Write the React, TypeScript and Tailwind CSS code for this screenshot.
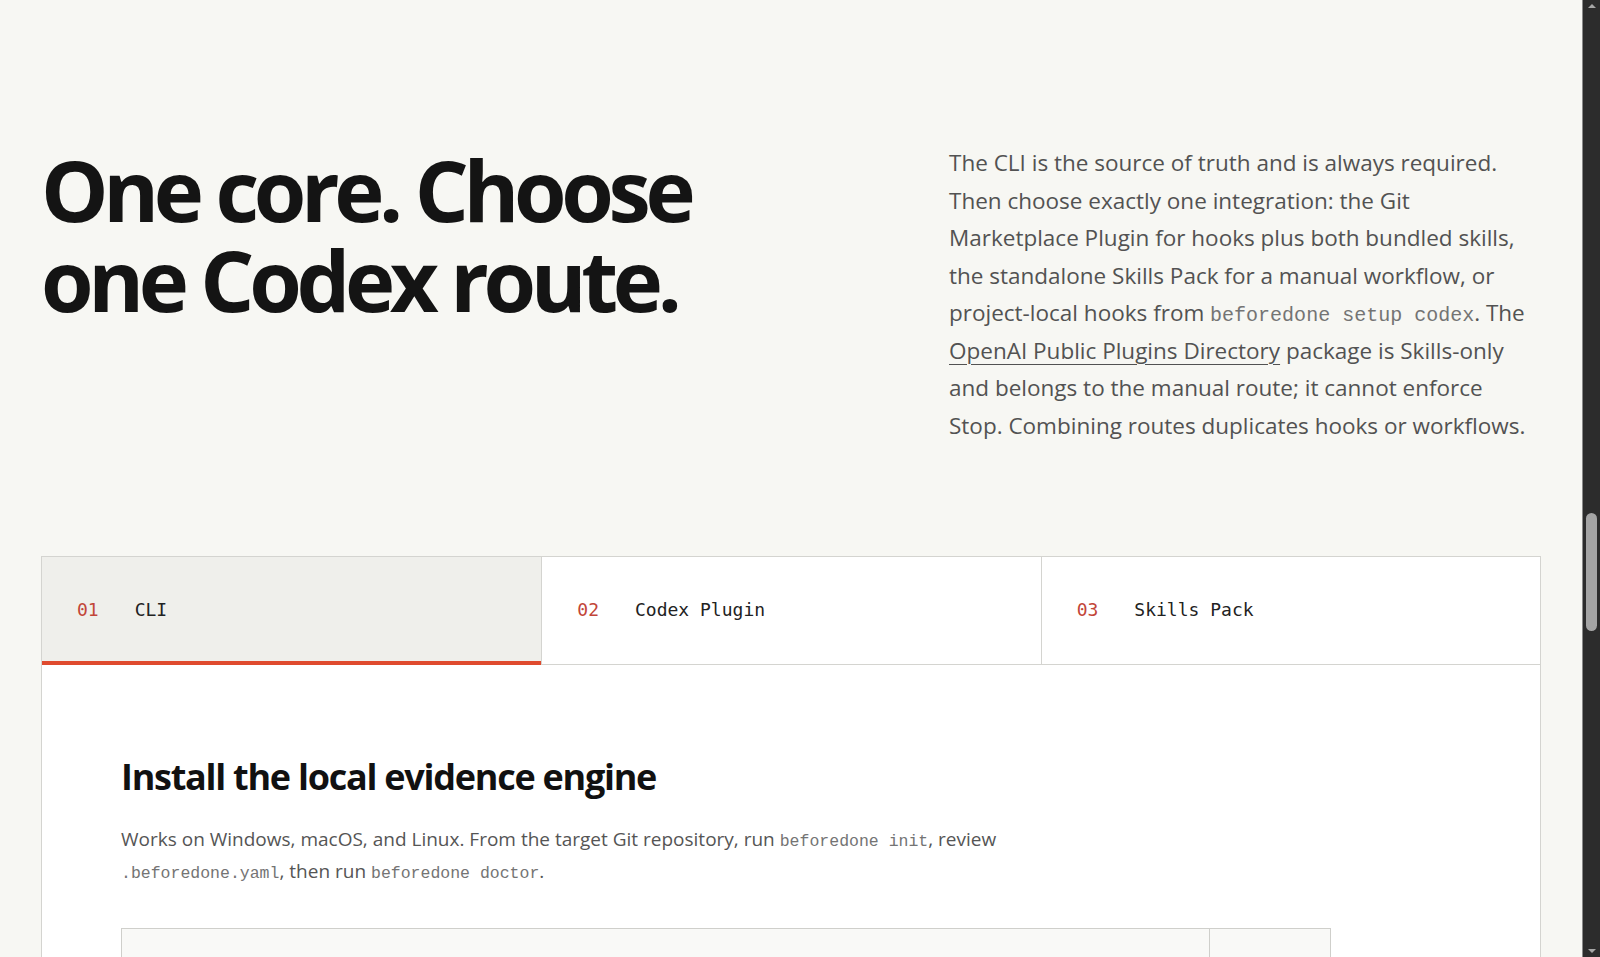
import React, { useState } from "react";

const sans = "font-['Open_Sans','Noto_Sans',sans-serif]";
const mono = "font-['Liberation_Mono','DejaVu_Sans_Mono',monospace]";
const tabMono = "font-['DejaVu_Sans_Mono','Liberation_Mono',monospace]";

function Code({ children, size }: { children: React.ReactNode; size: string }) {
  return <code className={`${mono} ${size} leading-none text-[#747474]`}>{children}</code>;
}

const tabs = [
  { n: "01", label: "CLI" },
  { n: "02", label: "Codex Plugin" },
  { n: "03", label: "Skills Pack" },
];

function Scrollbar() {
  return (
    <div className="w-[18px] shrink-0 h-full bg-[#2c2c2c] border-l border-[#8a8a8a] flex flex-col items-center">
      <svg width="10" height="8" viewBox="0 0 10 8" className="mt-[2px]">
        <path d="M1 6 L5 2 L9 6 Z" fill="#a6a6a6" />
      </svg>
      <div className="h-[503px] shrink-0" />
      <div className="w-[11px] h-[118px] rounded-full bg-[#a4a4a4]" />
      <div className="flex-1" />
      <svg width="10" height="8" viewBox="0 0 10 8" className="mb-[2px]">
        <path d="M1 2 L5 6 L9 2 Z" fill="#a6a6a6" />
      </svg>
    </div>
  );
}

export default function App() {
  const [active, setActive] = useState(0);
  return (
    <div className={`h-[957px] w-full flex overflow-hidden bg-[#f7f7f3] ${sans}`}>
      <main className="flex-1 h-full overflow-hidden">
        <div className="max-w-[1500px] mx-auto pt-[144px]">
          {/* Hero */}
          <section className="flex justify-between items-start">
            <h1 className="text-[85px] leading-[90px] font-bold tracking-[-0.063em] text-[#141414]">
              One core. Choose
              <br />
              one Codex route.
            </h1>
            <p className="w-[592px] text-[22.5px] leading-[37.5px] text-[#525252] whitespace-nowrap">
              The CLI is the source of truth and is always required.
              <br />
              Then choose exactly one integration: the Git
              <br />
              Marketplace Plugin for hooks plus both bundled skills,
              <br />
              the standalone Skills Pack for a manual workflow, or
              <br />
              project-local hooks from <Code size="text-[20px]">beforedone setup codex</Code>. The
              <br />
              <a href="#" className="underline underline-offset-[5px] decoration-1">
                OpenAI Public Plugins Directory
              </a>{" "}
              package is Skills-only
              <br />
              and belongs to the manual route; it cannot enforce
              <br />
              Stop. Combining routes duplicates hooks or workflows.
            </p>
          </section>

          {/* Route tabs */}
          <div className="mt-[112px] border-t border-x border-[#d4d4d0] grid grid-cols-3">
            {tabs.map((t, i) => {
              const on = i === active;
              return (
                <button
                  key={t.n}
                  onClick={() => setActive(i)}
                  className={`h-[108px] flex items-center gap-[36px] pl-[35px] pb-[4px] text-left ${tabMono} text-[18px] ${
                    i > 0 ? "border-l border-[#d4d4d0]" : ""
                  } ${
                    on
                      ? "bg-[#efefeb] shadow-[inset_0_-4px_0_#df4a2e]"
                      : "bg-white shadow-[inset_0_-1px_0_#d4d4d0]"
                  }`}
                >
                  <span className="text-[#c24538]">{t.n}</span>
                  <span className="text-[#222]">{t.label}</span>
                </button>
              );
            })}
          </div>

          {/* Panel */}
          <div className="bg-white border-x border-[#d4d4d0] pl-[79px] pt-[90px] h-[400px]">
            <h2 className="text-[36px] leading-[43px] font-bold tracking-[-0.035em] text-[#111]">
              Install the local evidence engine
            </h2>
            <p className="mt-[25px] text-[19px] leading-[32px] text-[#555] whitespace-nowrap">
              Works on Windows, macOS, and Linux. From the target Git repository, run{" "}
              <Code size="text-[16.5px]">beforedone init</Code>, review
              <br />
              <Code size="text-[16.5px]">.beforedone.yaml</Code>, then run{" "}
              <Code size="text-[16.5px]">beforedone doctor</Code>.
            </p>
            <div className="mt-[41px] w-[1210px] h-[120px] flex border border-[#cfcfcb] bg-[#f9f9f7]">
              <div className="flex-1" />
              <div className="w-[121px] border-l border-[#cfcfcb]" />
            </div>
          </div>
        </div>
      </main>
      <Scrollbar />
    </div>
  );
}
